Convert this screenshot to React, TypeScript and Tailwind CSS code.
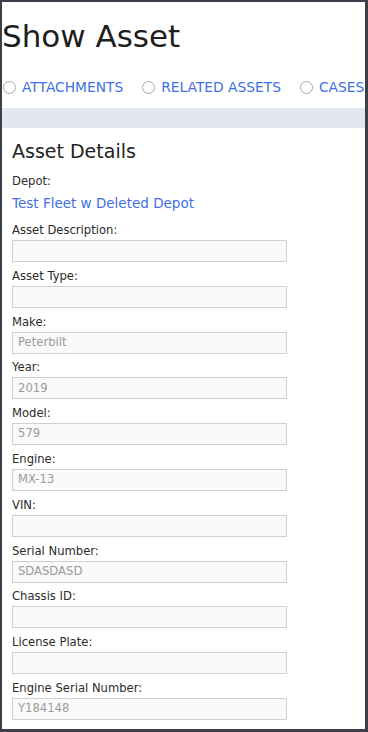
const fields: { label: string; value: string }[] = [
  { label: 'Asset Description:', value: '' },
  { label: 'Asset Type:', value: '' },
  { label: 'Make:', value: 'Peterbilt' },
  { label: 'Year:', value: '2019' },
  { label: 'Model:', value: '579' },
  { label: 'Engine:', value: 'MX-13' },
  { label: 'VIN:', value: '' },
  { label: 'Serial Number:', value: 'SDASDASD' },
  { label: 'Chassis ID:', value: '' },
  { label: 'License Plate:', value: '' },
  { label: 'Engine Serial Number:', value: 'Y184148' },
];

const tabs = ['ATTACHMENTS', 'RELATED ASSETS', 'CASES'];

function Radio() {
  return <span className="w-[13px] h-[13px] shrink-0 rounded-full border border-[#a8a8a8] bg-white" />;
}

export default function App() {
  return (
    <div
      className="h-[732px] w-[368px] overflow-hidden bg-white border-l-2 border-t-2 border-r-[3px] border-b-[3px] border-[#3e3f4b] text-[#2c2c2c]"
      style={{ fontFamily: '"DejaVu Sans", sans-serif' }}
    >
      <h1 className="mt-[13.5px] text-[31px] leading-[40px] text-[#1e1e1e] whitespace-nowrap">Show Asset</h1>

      <div className="mt-[21.5px] flex items-center h-[20px] pl-px whitespace-nowrap overflow-hidden">
        {tabs.map((t, i) => (
          <div key={t} className={`flex items-center gap-[6px] shrink-0 ${i > 0 ? 'ml-[19px]' : ''}`}>
            <Radio />
            <span className="text-[13.8px] leading-[20px] text-[#3f70e3]">{t}</span>
          </div>
        ))}
      </div>

      <div className="mt-[10.5px] h-[20.5px] bg-[#e3e7ef]" />

      <div className="px-[10px]">
        <h2 className="mt-[10.5px] text-[19px] leading-[24px] text-[#222]">Asset Details</h2>

        <div className="mt-[10.5px] text-[11.6px] leading-[16px]">Depot:</div>
        <div className="mt-[5px] text-[13.5px] leading-[18px] text-[#3f70e3] whitespace-nowrap">
          Test Fleet w Deleted Depot
        </div>

        <div className="mt-[10px] flex flex-col gap-[5.8px]">
          {fields.map((f) => (
            <div key={f.label}>
              <div className="text-[11.6px] leading-[16px] whitespace-nowrap">{f.label}</div>
              <div className="mt-[2px] w-[275px] h-[22px] border border-[#cfcfcf] bg-[#fafafa] px-[5px] flex items-center text-[11.6px] text-[#9a9a9a]">
                {f.value}
              </div>
            </div>
          ))}
        </div>
      </div>
    </div>
  );
}
